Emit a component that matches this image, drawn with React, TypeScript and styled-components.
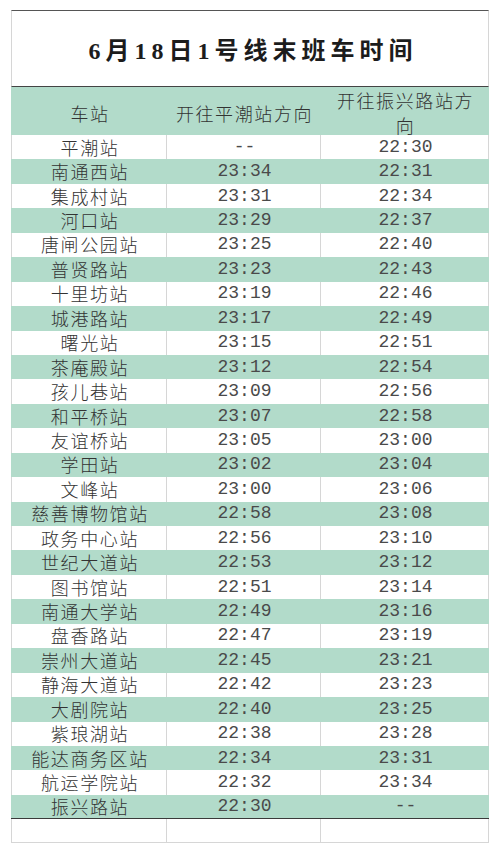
import styled, { createGlobalStyle } from "styled-components";

type Stop = [string, string, string];

const stops: Stop[] = [
  ["平潮站", "--", "22:30"],
  ["南通西站", "23:34", "22:31"],
  ["集成村站", "23:31", "22:34"],
  ["河口站", "23:29", "22:37"],
  ["唐闸公园站", "23:25", "22:40"],
  ["普贤路站", "23:23", "22:43"],
  ["十里坊站", "23:19", "22:46"],
  ["城港路站", "23:17", "22:49"],
  ["曙光站", "23:15", "22:51"],
  ["茶庵殿站", "23:12", "22:54"],
  ["孩儿巷站", "23:09", "22:56"],
  ["和平桥站", "23:07", "22:58"],
  ["友谊桥站", "23:05", "23:00"],
  ["学田站", "23:02", "23:04"],
  ["文峰站", "23:00", "23:06"],
  ["慈善博物馆站", "22:58", "23:08"],
  ["政务中心站", "22:56", "23:10"],
  ["世纪大道站", "22:53", "23:12"],
  ["图书馆站", "22:51", "23:14"],
  ["南通大学站", "22:49", "23:16"],
  ["盘香路站", "22:47", "23:19"],
  ["崇州大道站", "22:45", "23:21"],
  ["静海大道站", "22:42", "23:23"],
  ["大剧院站", "22:40", "23:25"],
  ["紫琅湖站", "22:38", "23:28"],
  ["能达商务区站", "22:34", "23:31"],
  ["航运学院站", "22:32", "23:34"],
  ["振兴路站", "22:30", "--"],
];

const GREEN = "#b2dbca";
const GRID = "#d6d6d6";

const GlobalStyle = createGlobalStyle`
  body {
    margin: 0;
    background: #ffffff;
    font-family: "Noto Sans CJK SC", sans-serif;
  }
`;

const Sheet = styled.div`
  width: 478px;
  margin: 10px 0 0 11px;
  display: flex;
  flex-direction: column;
`;

const Title = styled.div`
  height: 77px;
  border-top: 1px solid #555;
  border-bottom: 1px solid #444;
  border-left: 1px solid ${GRID};
  border-right: 1px solid ${GRID};
  display: flex;
  align-items: center;
  justify-content: center;
  font-family: "Liberation Serif", "Noto Sans CJK SC", serif;
  font-weight: 700;
  font-size: 24px;
  letter-spacing: 5px;
  color: #1c1c1c;
  padding: 0 0 0 6px;
  box-sizing: border-box;
`;

const Row = styled.div<{ $green?: boolean; $height: number; $last?: boolean }>`
  display: grid;
  grid-template-columns: 156px 154px 168px;
  height: ${(p) => p.$height}px;
  background: ${(p) => (p.$green ? GREEN : "#ffffff")};
  border-bottom: ${(p) => (p.$last ? "1px solid #3a3a3a" : "none")};
  box-sizing: border-box;
`;

const Cell = styled.div<{ $green?: boolean; $mono?: boolean }>`
  display: flex;
  align-items: center;
  justify-content: center;
  text-align: center;
  padding: 0 0 0 2px;
  box-sizing: border-box;
  white-space: nowrap;
  border-right: 1px solid ${(p) => (p.$green ? "transparent" : GRID)};
  &:first-child {
    border-left: 1px solid ${(p) => (p.$green ? "transparent" : GRID)};
  }
  font-family: ${(p) =>
    p.$mono
      ? `"Liberation Mono", "Noto Sans CJK SC", monospace`
      : `"Noto Sans CJK SC", sans-serif`};
  font-size: 18px;
  font-weight: 300;
  letter-spacing: ${(p) => (p.$mono ? "0" : "1.6px")};
  line-height: 23px;
  color: ${(p) => (p.$mono ? "#4a4a4a" : "#333333")};
`;

const HeadCell = styled(Cell)`
  line-height: 25px;
  padding-top: 1px;
`;

const BlankRow = styled.div`
  display: grid;
  grid-template-columns: 156px 154px 168px;
  height: 24px;
  border-bottom: 1px solid ${GRID};
  box-sizing: border-box;
`;

const BlankCell = styled.div`
  border-right: 1px solid ${GRID};
  &:first-child {
    border-left: 1px solid ${GRID};
  }
`;

export default function App() {
  return (
    <>
      <GlobalStyle />
      <Sheet>
        <Title>6月18日1号线末班车时间</Title>
        <Row $green $height={48}>
          <HeadCell $green>车站</HeadCell>
          <HeadCell $green>开往平潮站方向</HeadCell>
          <HeadCell $green>
            开往振兴路站方
            <br />向
          </HeadCell>
        </Row>
        {stops.map(([name, a, b], i) => {
          const green = i % 2 === 1;
          return (
            <Row
              key={name}
              $green={green}
              $height={24.45}
              $last={i === stops.length - 1}
            >
              <Cell $green={green}>{name}</Cell>
              <Cell $green={green} $mono>
                {a}
              </Cell>
              <Cell $green={green} $mono>
                {b}
              </Cell>
            </Row>
          );
        })}
        <BlankRow>
          <BlankCell />
          <BlankCell />
          <BlankCell />
        </BlankRow>
      </Sheet>
    </>
  );
}
